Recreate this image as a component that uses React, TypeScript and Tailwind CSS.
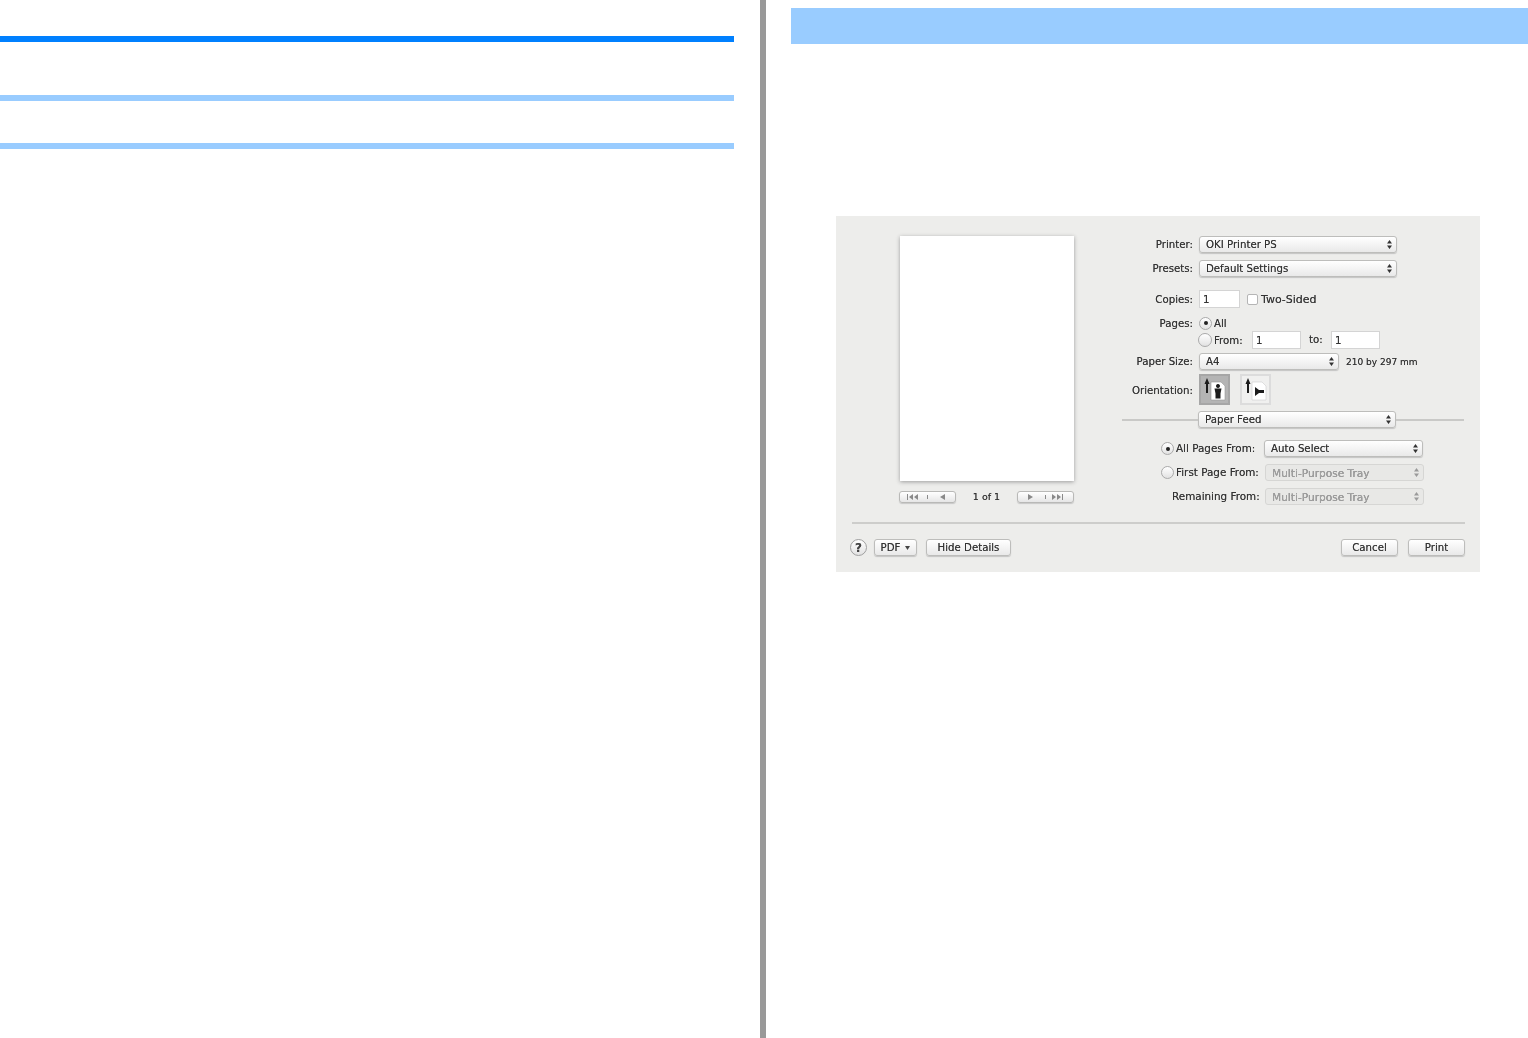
import React from "react";

const Updown = ({ light }: { light?: boolean }) => (
  <svg width="5" height="9" viewBox="0 0 5 9" className="shrink-0">
    <path d="M2.5 0 5 3.4H0Z M2.5 9 5 5.6H0Z" fill={light ? "#9a9a9a" : "#333"} />
  </svg>
);

const Select = ({
  text,
  width,
  disabled,
}: {
  text: string;
  width: string;
  disabled?: boolean;
}) => (
  <div
    className={`${width} h-[17px] shrink-0 flex items-center justify-between pl-[6px] pr-[4px] rounded-[3px] border ${
      disabled
        ? "border-[#d6d6d4] bg-[#e8e8e6] text-[#a3a3a3] text-[10.6px]"
        : "border-[#bdbdbb] bg-gradient-to-b from-[#ffffff] to-[#e9e9e9] shadow-[0_1px_1px_#c4c4c4]"
    }`}
  >
    <span className="pt-[1px]">{text}</span>
    <Updown light={disabled} />
  </div>
);

const Field = ({ value, width }: { value: string; width: string }) => (
  <div className={`${width} h-[18px] shrink-0 border border-[#d4d4d4] bg-white pl-[3px] pt-[1px] leading-[16px]`}>
    {value}
  </div>
);

const Radio = ({ on, className = "" }: { on?: boolean; className?: string }) => (
  <span
    className={`${className} w-[13px] h-[13px] shrink-0 rounded-full border border-[#aaa] bg-gradient-to-b from-white to-[#e2e2e2] flex items-center justify-center`}
  >
    {on && <span className="w-[4px] h-[4px] rounded-full bg-[#222]" />}
  </span>
);

const Label = ({ text, className = "pt-[1px]" }: { text: string; className?: string }) => (
  <span className={`${className} w-[71px] shrink-0 whitespace-nowrap flex justify-end`}>{text}</span>
);

const Btn = ({ text, width, className = "" }: { text: string; width: string; className?: string }) => (
  <div
    className={`${width} ${className} h-[17px] pt-[1px] flex items-center justify-center rounded-[3px] border border-[#bdbdbb] bg-gradient-to-b from-white to-[#e9e9e9] shadow-[0_1px_1px_#c4c4c4]`}
  >
    {text}
  </div>
);

const Pager = ({ kind }: { kind: "prev" | "next" }) => (
  <div className="w-[57px] h-[12px] rounded-[3px] border border-[#b9b9b7] bg-gradient-to-b from-white to-[#e6e6e6] shadow-[0_1px_1px_#c8c8c8]">
    <svg width="55" height="10" viewBox="0 0 55 10">
      {kind === "prev" ? (
        <path d="M7 2h1v6H7Z M13 2v6l-4-3Z M18 2v6l-4-3Z M27 3h1v4h-1Z M45 2v6l-5-3Z" fill="#8a8a8a" />
      ) : (
        <path d="M10 2v6l5-3Z M27 3h1v4h-1Z M34 2v6l4-3Z M39 2v6l4-3Z M44 2h1v6h-1Z" fill="#8a8a8a" />
      )}
    </svg>
  </div>
);

const Orient = ({ active, landscape }: { active?: boolean; landscape?: boolean }) => (
  <div
    className={`w-[31px] h-[31px] shrink-0 border-2 ${
      active ? "border-[#a6a6a6] bg-[#b4b4b4]" : "border-[#dcdcdc] bg-[#f0f0ef]"
    }`}
  >
    <svg width="27" height="27" viewBox="0 0 27 27">
      <path d="M6 2 8.5 8H7V17H5V8H3.5Z" fill="#1c1c1c" />
      <path d="M10 6h10l4 4v14H10Z" fill="#fff" stroke={active ? "#999" : "#ccc"} strokeWidth="0.6" />
      {landscape ? (
        <path d="M13 11v9l4-3h5v-3h-5Z" fill="#1c1c1c" />
      ) : (
        <path d="M17 8a2 2 0 1 1-.01 0Z M13.5 12.5h7l-1 5v5h-5v-5Z" fill="#1c1c1c" />
      )}
    </svg>
  </div>
);

export default function App() {
  return (
    <div className="w-[1528px] h-[1038px] flex bg-white overflow-hidden">
      <div className="w-[734px] shrink-0 pt-[36px]">
        <div className="h-[6px] bg-[#0080ff]" />
        <div className="h-[6px] bg-[#99ccff] mt-[53px]" />
        <div className="h-[6px] bg-[#99ccff] mt-[42px]" />
      </div>
      <div className="w-[6px] h-full shrink-0 bg-[#999999] ml-[26px]" />
      <div className="flex-1 pl-[25px] pt-[8px]">
        <div className="h-[36px] bg-[#99ccff]" />
        <div
          className="w-[644px] h-[356px] mt-[172px] ml-[45px] bg-[#ededeb] blur-[0.7px] text-[#333] text-[10.2px] leading-none [text-shadow:0_0_0.5px_#666]"
          style={{ fontFamily: '"DejaVu Sans", sans-serif' }}
        >
          <div className="h-[306px] flex">
            <div className="w-[175px] ml-[63px] pt-[20px] shrink-0">
              <div className="h-[245px] ml-[1px] bg-white shadow-[0_1px_4px_#9c9c9c]" />
              <div className="mt-[10px] flex items-center justify-between">
                <Pager kind="prev" />
                <span className="text-[9.5px]">1 of 1</span>
                <Pager kind="next" />
              </div>
            </div>
            <div className="w-[342px] ml-[48px] pt-[20px] shrink-0">
              <div className="flex items-center gap-[6px]">
                <Label text="Printer:" />
                <Select text="OKI Printer PS" width="w-[198px]" />
              </div>
              <div className="flex items-center gap-[6px] mt-[7px]">
                <Label text="Presets:" />
                <Select text="Default Settings" width="w-[198px]" />
              </div>
              <div className="flex items-center gap-[6px] mt-[13px]">
                <Label text="Copies:" className="pt-[2px]" />
                <Field value="1" width="w-[41px]" />
                <span className="w-[11px] h-[11px] ml-[1px] rounded-[2px] border border-[#b5b5b5] bg-white" />
                <span className="-ml-[3px] pt-[1px] text-[11px]">Two-Sided</span>
              </div>
              <div className="flex items-center gap-[6px] mt-[7px] h-[16px]">
                <Label text="Pages:" className="pt-[2px]" />
                <Radio on />
                <span className="-ml-[4px] pt-[2px]">All</span>
              </div>
              <div className="flex items-center pl-[76px]">
                <Radio className="!w-[14px] !h-[14px]" />
                <span className="ml-[2px] pt-[2px] w-[38px]">From:</span>
                <Field value="1" width="w-[49px]" />
                <span className="ml-[8px] pt-[1px] w-[22px]">to:</span>
                <Field value="1" width="w-[49px]" />
              </div>
              <div className="flex items-center gap-[6px] mt-[4px]">
                <Label text="Paper Size:" />
                <Select text="A4" width="w-[140px]" />
                <span className="text-[9px] ml-[1px] pt-[1px] whitespace-nowrap">210 by 297 mm</span>
              </div>
              <div className="flex items-center gap-[6px] mt-[4px]">
                <Label text="Orientation:" className="pt-[3px]" />
                <Orient active />
                <span className="ml-[4px] flex">
                  <Orient landscape />
                </span>
              </div>
              <div className="flex items-center mt-[6px]">
                <div className="w-[76px] h-[2px] bg-[#c9c9c7]" />
                <Select text="Paper Feed" width="w-[198px]" />
                <div className="flex-1 h-[2px] bg-[#c9c9c7]" />
              </div>
              <div className="flex items-center mt-[12px] pl-[39px]">
                <Radio on />
                <span className="ml-[2px] w-[88px] whitespace-nowrap text-[10.4px]">All Pages From:</span>
                <Select text="Auto Select" width="w-[159px]" />
              </div>
              <div className="flex items-center mt-[7px] pl-[39px]">
                <Radio />
                <span className="ml-[2px] w-[89px] whitespace-nowrap text-[10.4px]">First Page From:</span>
                <Select text="Multi-Purpose Tray" width="w-[159px]" disabled />
              </div>
              <div className="flex items-center mt-[7px] pl-[50px]">
                <span className="w-[93px] whitespace-nowrap text-[10.4px]">Remaining From:</span>
                <Select text="Multi-Purpose Tray" width="w-[159px]" disabled />
              </div>
            </div>
          </div>
          <div className="h-[2px] w-[613px] ml-[16px] bg-[#cdcdcb]" />
          <div className="flex items-center mt-[15px] ml-[14px]">
            <span className="w-[17px] h-[17px] rounded-full border border-[#a0a0a0] bg-gradient-to-b from-white to-[#e2e2e2] flex items-center justify-center text-[12px] font-bold text-[#444]">
              ?
            </span>
            <div className="ml-[7px] w-[43px] h-[17px] flex items-center justify-center gap-[5px] rounded-[3px] border border-[#bdbdbb] bg-gradient-to-b from-white to-[#e9e9e9] shadow-[0_1px_1px_#c4c4c4]">
              <span className="pt-[1px]">PDF</span>
              <svg width="5" height="4" viewBox="0 0 5 4">
                <path d="M0 0h5L2.5 4Z" fill="#444" />
              </svg>
            </div>
            <Btn text="Hide Details" width="w-[85px]" className="ml-[9px]" />
            <Btn text="Cancel" width="w-[57px]" className="ml-auto" />
            <Btn text="Print" width="w-[57px]" className="ml-[10px] mr-[15px]" />
          </div>
        </div>
      </div>
    </div>
  );
}
